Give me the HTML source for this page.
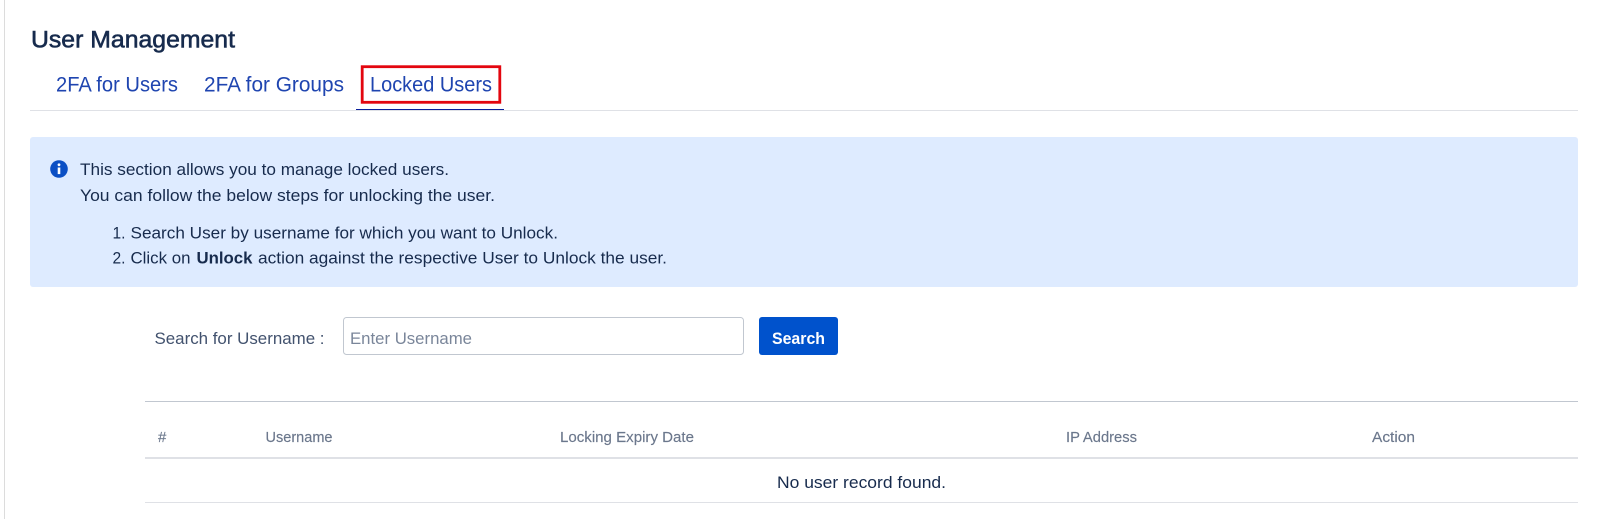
<!DOCTYPE html>
<html lang="en"><head><meta charset="utf-8"><title>User Management</title>
<style>
html,body{margin:0;padding:0;background:#fff;width:1600px;height:519px;overflow:hidden}
svg{display:block}
text{font-family:"Liberation Sans",sans-serif;fill:#172b4d;font-size:17px}
.tab{font-size:21px;fill:#1f45b0}
.th{font-size:15px;fill:#6b778c;stroke:#6b778c;stroke-width:.15px}
.lab{fill:#42526e}
</style></head><body>
<svg width="1600" height="519" viewBox="0 0 1600 519" xmlns="http://www.w3.org/2000/svg">
<rect width="1600" height="519" fill="#fff"/>
<rect x="4" y="0" width="1" height="519" fill="#dcdcdc"/>
<text x="31" y="47.700" style="font-size:24.5px;stroke:#172b4d;stroke-width:.6px" textLength="204" lengthAdjust="spacingAndGlyphs">User Management</text>
<text class="tab" x="56" y="91.700" textLength="122" lengthAdjust="spacingAndGlyphs">2FA for Users</text>
<text class="tab" x="204" y="91.700" textLength="140" lengthAdjust="spacingAndGlyphs">2FA for Groups</text>
<text class="tab" x="370" y="91.700" textLength="122" lengthAdjust="spacingAndGlyphs">Locked Users</text>
<rect x="30" y="110" width="1548" height="1" fill="#dfe1e6"/>
<rect x="356" y="109" width="148" height="1" fill="#0a1f9c"/>
<rect x="362.200" y="66.700" width="137.600" height="35.600" fill="none" stroke="#e3060f" stroke-width="2.8"/>
<rect x="30" y="137" width="1548" height="150" rx="3" fill="#deebff"/>
<circle cx="59" cy="169" r="8.800" fill="#0b4fc4"/>
<circle cx="59" cy="164.800" r="1.400" fill="#fff"/>
<rect x="57.700" y="167.500" width="2.600" height="6.600" fill="#fff"/>
<text x="80" y="175" textLength="369" lengthAdjust="spacingAndGlyphs">This section allows you to manage locked users.</text>
<text x="80" y="201" textLength="415" lengthAdjust="spacingAndGlyphs">You can follow the below steps for unlocking the user.</text>
<text x="112.500" y="238.500" textLength="13" lengthAdjust="spacingAndGlyphs">1.</text>
<text x="130.500" y="238.500" textLength="427.500" lengthAdjust="spacingAndGlyphs">Search User by username for which you want to Unlock.</text>
<text x="112.500" y="263.500" textLength="13" lengthAdjust="spacingAndGlyphs">2.</text>
<text x="130.500" y="263.500" textLength="60" lengthAdjust="spacingAndGlyphs">Click on</text>
<text x="196.500" y="263.500" font-weight="700" textLength="56" lengthAdjust="spacingAndGlyphs">Unlock</text>
<text x="258" y="263.500" textLength="409" lengthAdjust="spacingAndGlyphs">action against the respective User to Unlock the user.</text>
<text class="lab" x="154.500" y="344" textLength="170" lengthAdjust="spacingAndGlyphs">Search for Username :</text>
<rect x="343.500" y="317.500" width="400" height="37" rx="3" fill="#fff" stroke="#c1c7d0"/>
<text x="350" y="344" style="fill:#7a869a" textLength="122" lengthAdjust="spacingAndGlyphs">Enter Username</text>
<rect x="759" y="317" width="79" height="38" rx="3" fill="#0052cc"/>
<text x="772" y="344" font-weight="700" style="fill:#fff" textLength="53" lengthAdjust="spacingAndGlyphs">Search</text>
<rect x="145" y="401" width="1433" height="1" fill="#c1c7d0"/>
<text class="th" x="158" y="442">#</text>
<text class="th" x="265.500" y="442" textLength="67" lengthAdjust="spacingAndGlyphs">Username</text>
<text class="th" x="560" y="442" textLength="134" lengthAdjust="spacingAndGlyphs">Locking Expiry Date</text>
<text class="th" x="1066" y="442" textLength="71" lengthAdjust="spacingAndGlyphs">IP Address</text>
<text class="th" x="1372" y="442" textLength="43" lengthAdjust="spacingAndGlyphs">Action</text>
<rect x="145" y="457" width="1433" height="2" fill="#dfe1e6"/>
<text x="777" y="488" textLength="169" lengthAdjust="spacingAndGlyphs">No user record found.</text>
<rect x="145" y="502" width="1433" height="1" fill="#dfe1e6"/>
</svg>
</body></html>
